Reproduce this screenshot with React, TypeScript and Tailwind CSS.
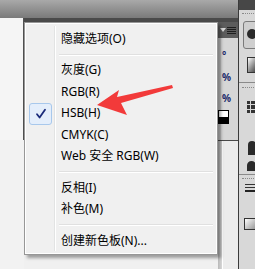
import React from "react";

type Item = { label: string; sep?: false; checked?: boolean } | { sep: true };

const items: Item[] = [
  { label: "隐藏选项(O)" },
  { sep: true },
  { label: "灰度(G)" },
  { label: "RGB(R)" },
  { label: "HSB(H)", checked: true },
  { label: "CMYK(C)" },
  { label: "Web 安全 RGB(W)" },
  { sep: true },
  { label: "反相(I)" },
  { label: "补色(M)" },
  { sep: true },
  { label: "创建新色板(N)..." },
];

function Menu() {
  return (
    <div className="absolute left-[24px] top-[22px] w-[194px] border border-[#979797] bg-[#f0f0f0] shadow-[3px_3px_3px_rgba(0,0,0,0.35)]">
      <div className="relative border border-white px-[2px] pt-[4px] pb-[1px]">
        {/* gutter separator */}
        <div className="absolute left-[28px] top-[2px] bottom-[2px] w-[2px] border-l border-[#e2e3e3] bg-white" />
        {items.map((it, i) =>
          it.sep ? (
            <div key={i} className="flex h-[10px] items-center pl-[31px] pr-[1px]">
              <div className="h-[2px] w-full border-t border-[#e0e0e0] bg-white" />
            </div>
          ) : (
            <div key={i} className="relative flex h-[21.5px] items-center pl-[33px] text-[12px] leading-none text-black">
              {it.checked && (
                <div className="absolute left-[1px] top-[0px] flex h-[22px] w-[23px] items-center justify-center rounded-[3px] border border-[#a8c8ec] bg-[#e4eefb]">
                  <svg width="12" height="12" viewBox="0 0 12 12">
                    <path d="M2 6.2 L4.6 9.5 L10 1.8" fill="none" stroke="#1a2a7a" strokeWidth="1.8" strokeLinecap="round" strokeLinejoin="round" />
                  </svg>
                </div>
              )}
              <span>{it.label}</span>
            </div>
          )
        )}
      </div>
    </div>
  );
}

function Arrow() {
  return (
    <svg className="absolute left-0 top-0" width="255" height="269" viewBox="0 0 255 269">
      <polygon
        points="97,105 119,90 117,97 172,85 173,88 121,103 127,115"
        fill="#f23a3a"
      />
    </svg>
  );
}

export default function App() {
  return (
    <div
      className="relative flex h-[269px] w-[255px] overflow-hidden bg-[#f2f2f2]"
      style={{ fontFamily: '"Noto Sans", "Noto Sans CJK SC", sans-serif' }}
    >
      {/* main column */}
      <div className="flex w-[238px] flex-col">
        <div className="h-[18px] bg-gradient-to-b from-[#a9a9a9] to-[#7a7a7a]" />
        <div className="flex flex-1">
          {/* left panel */}
          <div className="flex w-[24px] flex-col">
            <div className="h-[122px] border-r border-[#505050] bg-[#f5f5f5]" />
            <div className="flex-1 bg-[#f2f2f2]" />
          </div>
          {/* work area */}
          <div className="flex flex-1 flex-col">
            <div className="h-[4px] bg-[#4a4a4a]" />
            <div className="flex-1 bg-[#f0f0f0]" />
          </div>
          {/* middle column */}
          <div className="flex w-[20px] flex-col">
            <div className="h-[4px] bg-[#4a4a4a]" />
            <div className="flex h-[16px] items-center justify-end gap-[1px] bg-[#5c5c5c] pr-[2px]">
              <svg width="6" height="4" viewBox="0 0 6 4">
                <path d="M0 0 H6 L3 4 Z" fill="#d8d8d8" />
              </svg>
              <div className="flex flex-col gap-[1px]">
                <div className="h-[1px] w-[9px] bg-[#1e1e1e]" />
                <div className="h-[1px] w-[9px] bg-[#1e1e1e]" />
                <div className="h-[1px] w-[9px] bg-[#1e1e1e]" />
                <div className="h-[1px] w-[9px] bg-[#1e1e1e]" />
              </div>
            </div>
            <div className="flex h-[103px] border-b border-[#4a4a4a] bg-[#d6d6d6]">
              <div className="w-[3px] bg-[#c2c2c2]" />
              <div className="flex flex-1 flex-col items-start pl-[1px] text-[10px] font-bold leading-none text-[#1a2a6a]">
                <span className="mt-[12px]">°</span>
                <span className="mt-[12px]">%</span>
                <span className="mt-[11px]">%</span>
                <div className="mt-[7px] -ml-[4px] flex h-[14px] w-[11px] flex-col border border-black">
                  <div className="flex-1 bg-white" />
                  <div className="flex-1 bg-black" />
                </div>
              </div>
            </div>
            <div className="flex flex-1">
              <div className="w-[4px] bg-gradient-to-r from-[#b8b8b8] to-[#d8d8d8]" />
              <div className="w-[1px] bg-white" />
              <div className="flex-1 bg-[#ececec]" />
            </div>
          </div>
        </div>
      </div>
      {/* right panel */}
      <div className="flex w-[17px] flex-col border-l border-[#3a3a3a] bg-[#d8d8d8]">
        <div className="h-[10px] bg-[#474747]" />
        <div className="mt-[3px] ml-[3px] h-[1px] w-[12px] border-t border-dotted border-[#8a8a8a]" />
        <div className="mt-[7px] ml-[4px] h-[28px] w-[16px] rounded-[3px] border border-[#7a7a7a] bg-[#cfcfcf] pl-[3px] pt-[7px]">
          <div className="h-[10px] w-[10px] rounded-full bg-[#2a2a2a]" />
        </div>
        <div className="mt-[8px] ml-[8px] h-[16px] w-[12px] border border-[#333] bg-gradient-to-br from-white to-[#333]" />
        <div className="mt-[9px] h-[1px] w-full bg-[#8a8a8a]" />
        <div className="mt-[4px] ml-[3px] h-[1px] w-[12px] border-t border-dotted border-[#8a8a8a]" />
        <div className="mt-[13px] ml-[8px] grid h-[12px] w-[12px] grid-cols-3 gap-[1px] bg-[#d8d8d8]">
          {Array.from({ length: 9 }).map((_, i) => (
            <div key={i} className="bg-[#333]" />
          ))}
        </div>
        <div className="mt-[28px] ml-[9px] h-[14px] w-[8px] rounded-t-full bg-[#2a2a2a]" />
        <div className="mt-[6px] ml-[8px] h-[10px] w-[9px] rounded-t-full bg-[#2a2a2a]" />
        <div className="mt-[3px] h-[1px] w-full bg-[#8a8a8a]" />
        <div className="mt-[3px] ml-[3px] h-[1px] w-[12px] border-t border-dotted border-[#8a8a8a]" />
        <div className="mt-[5px] ml-[6px] flex flex-col gap-[2px]">
          <div className="h-[1px] w-[10px] bg-[#333]" />
          <div className="h-[1px] w-[10px] bg-[#333]" />
          <div className="h-[2px] w-[10px] bg-[#222]" />
        </div>
        <div className="mt-[26px] ml-[5px] h-[12px] w-[12px] border border-[#333] bg-gradient-to-br from-white to-[#999]" />
      </div>
      <Menu />
      <Arrow />
    </div>
  );
}
